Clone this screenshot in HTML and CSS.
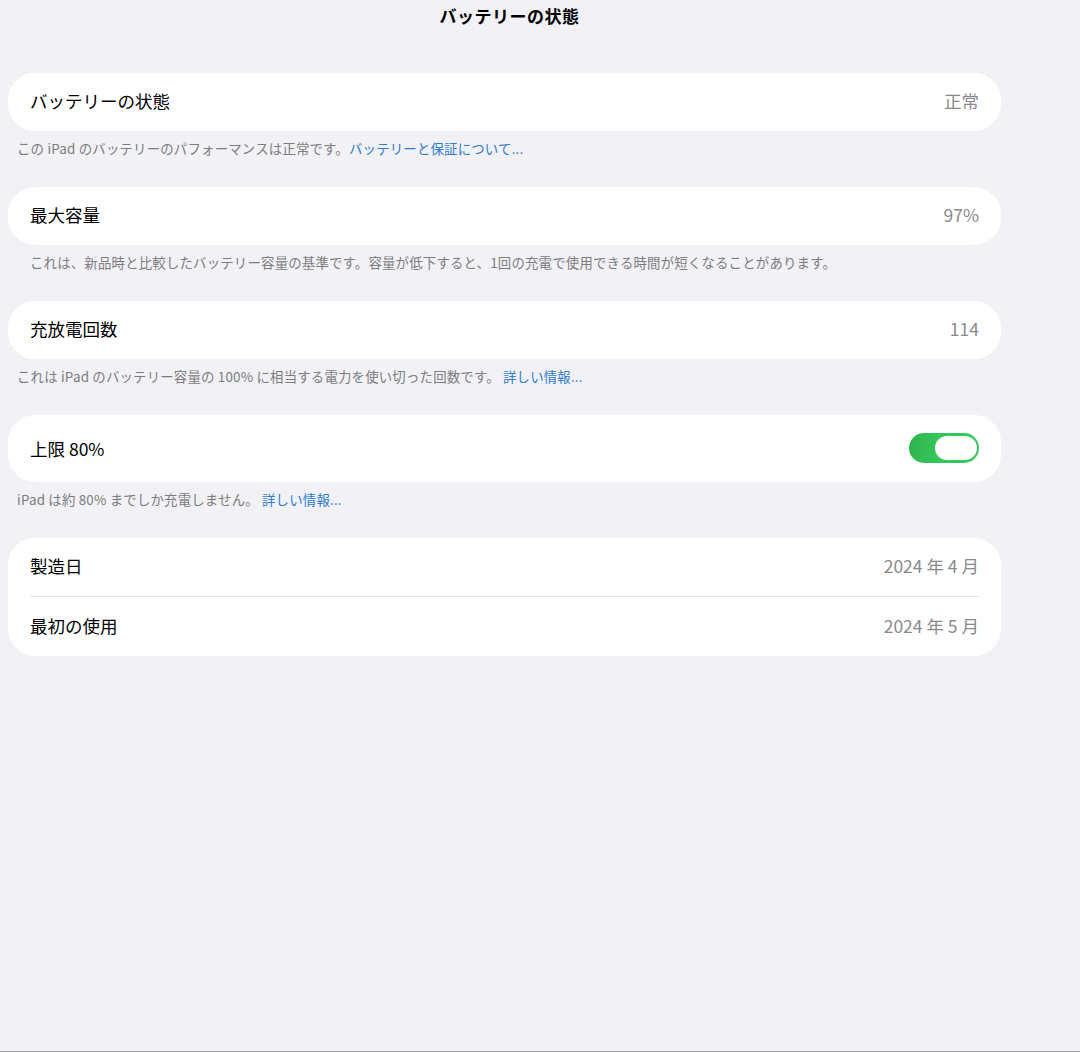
FILE: index.html
```html
<!DOCTYPE html>
<html lang="ja">
<head>
    <meta charset="UTF-8">
    <meta name="viewport" content="width=device-width, initial-scale=1.0">
    <title>バッテリーの状態</title>
    <link rel="stylesheet" href="styles.css">
</head>
<body>
    <div class="page">
        <header class="nav-bar">
            <h1>バッテリーの状態</h1>
        </header>

        <div class="settings">
            <div class="group">
                <div class="row">
                    <span class="label">バッテリーの状態</span>
                    <span class="value">正常</span>
                </div>
            </div>
            <p class="footnote">この iPad のバッテリーのパフォーマンスは正常です。<a href="#">バッテリーと保証について...</a></p>

            <div class="group">
                <div class="row">
                    <span class="label">最大容量</span>
                    <span class="value">97%</span>
                </div>
            </div>
            <p class="footnote indent">これは、新品時と比較したバッテリー容量の基準です。容量が低下すると、1回の充電で使用できる時間が短くなることがあります。</p>

            <div class="group">
                <div class="row">
                    <span class="label">充放電回数</span>
                    <span class="value">114</span>
                </div>
            </div>
            <p class="footnote">これは iPad のバッテリー容量の 100% に相当する電力を使い切った回数です。 <a href="#">詳しい情報...</a></p>

            <div class="group">
                <div class="row tall">
                    <span class="label">上限 80%</span>
                    <span class="switch on"><span class="knob"></span></span>
                </div>
            </div>
            <p class="footnote">iPad は約 80% までしか充電しません。 <a href="#">詳しい情報...</a></p>

            <div class="group">
                <div class="row">
                    <span class="label">製造日</span>
                    <span class="value">2024 年 4 月</span>
                </div>
                <div class="row">
                    <span class="label">最初の使用</span>
                    <span class="value">2024 年 5 月</span>
                </div>
            </div>
        </div>
    </div>
</body>
</html>
```

FILE: styles.css
```css
/* 設定画面 - バッテリー */
html, body {
    margin: 0;
    padding: 0;
    background-color: #F2F1F6;
}
body {
    font-family: "Noto Sans CJK JP", "Noto Sans", sans-serif;
    color: #000;
}
.page {
    height: 1052px;
    border-bottom: 1px solid #A4A4A6;
    box-sizing: border-box;
}
.nav-bar {
    width: 1019px;
    height: 73px;
    text-align: center;
}
.nav-bar h1 {
    margin: 0;
    padding-top: 4px;
    font-size: 17px;
    font-weight: 700;
    letter-spacing: 0.5px;
    line-height: 24px;
}
.settings {
    width: 993px;
    margin-left: 8px;
}
.group {
    background-color: #fff;
    border-radius: 27px;
    padding: 0 22px;
}
.row {
    display: flex;
    justify-content: space-between;
    align-items: center;
    height: 58px;
    padding-bottom: 3px;
    box-sizing: border-box;
    font-size: 17.5px;
}
.row + .row {
    border-top: 1px solid #E2E2E6;
    height: 60px;
}
.row.tall {
    height: 67px;
    padding-bottom: 1px;
}
.value {
    color: #8A8A8E;
}
.footnote {
    margin: 0;
    padding: 8px 0 30px 9px;
    font-size: 13.4px;
    letter-spacing: 0.2px;
    line-height: 18px;
    color: #7C7C80;
}
.footnote.indent {
    padding-left: 22px;
}
.footnote a {
    color: #2F7BD2;
    text-decoration: none;
}
/* スイッチ */
.switch {
    display: flex;
    align-items: center;
    justify-content: flex-end;
    width: 70px;
    height: 30px;
    border-radius: 15px;
    background: linear-gradient(90deg, #2FB44E, #36C65A 40%);
    box-sizing: border-box;
    padding: 3px 2px;
}
.switch .knob {
    width: 42px;
    height: 24px;
    border-radius: 12px;
    background-color: #fff;
}
```
